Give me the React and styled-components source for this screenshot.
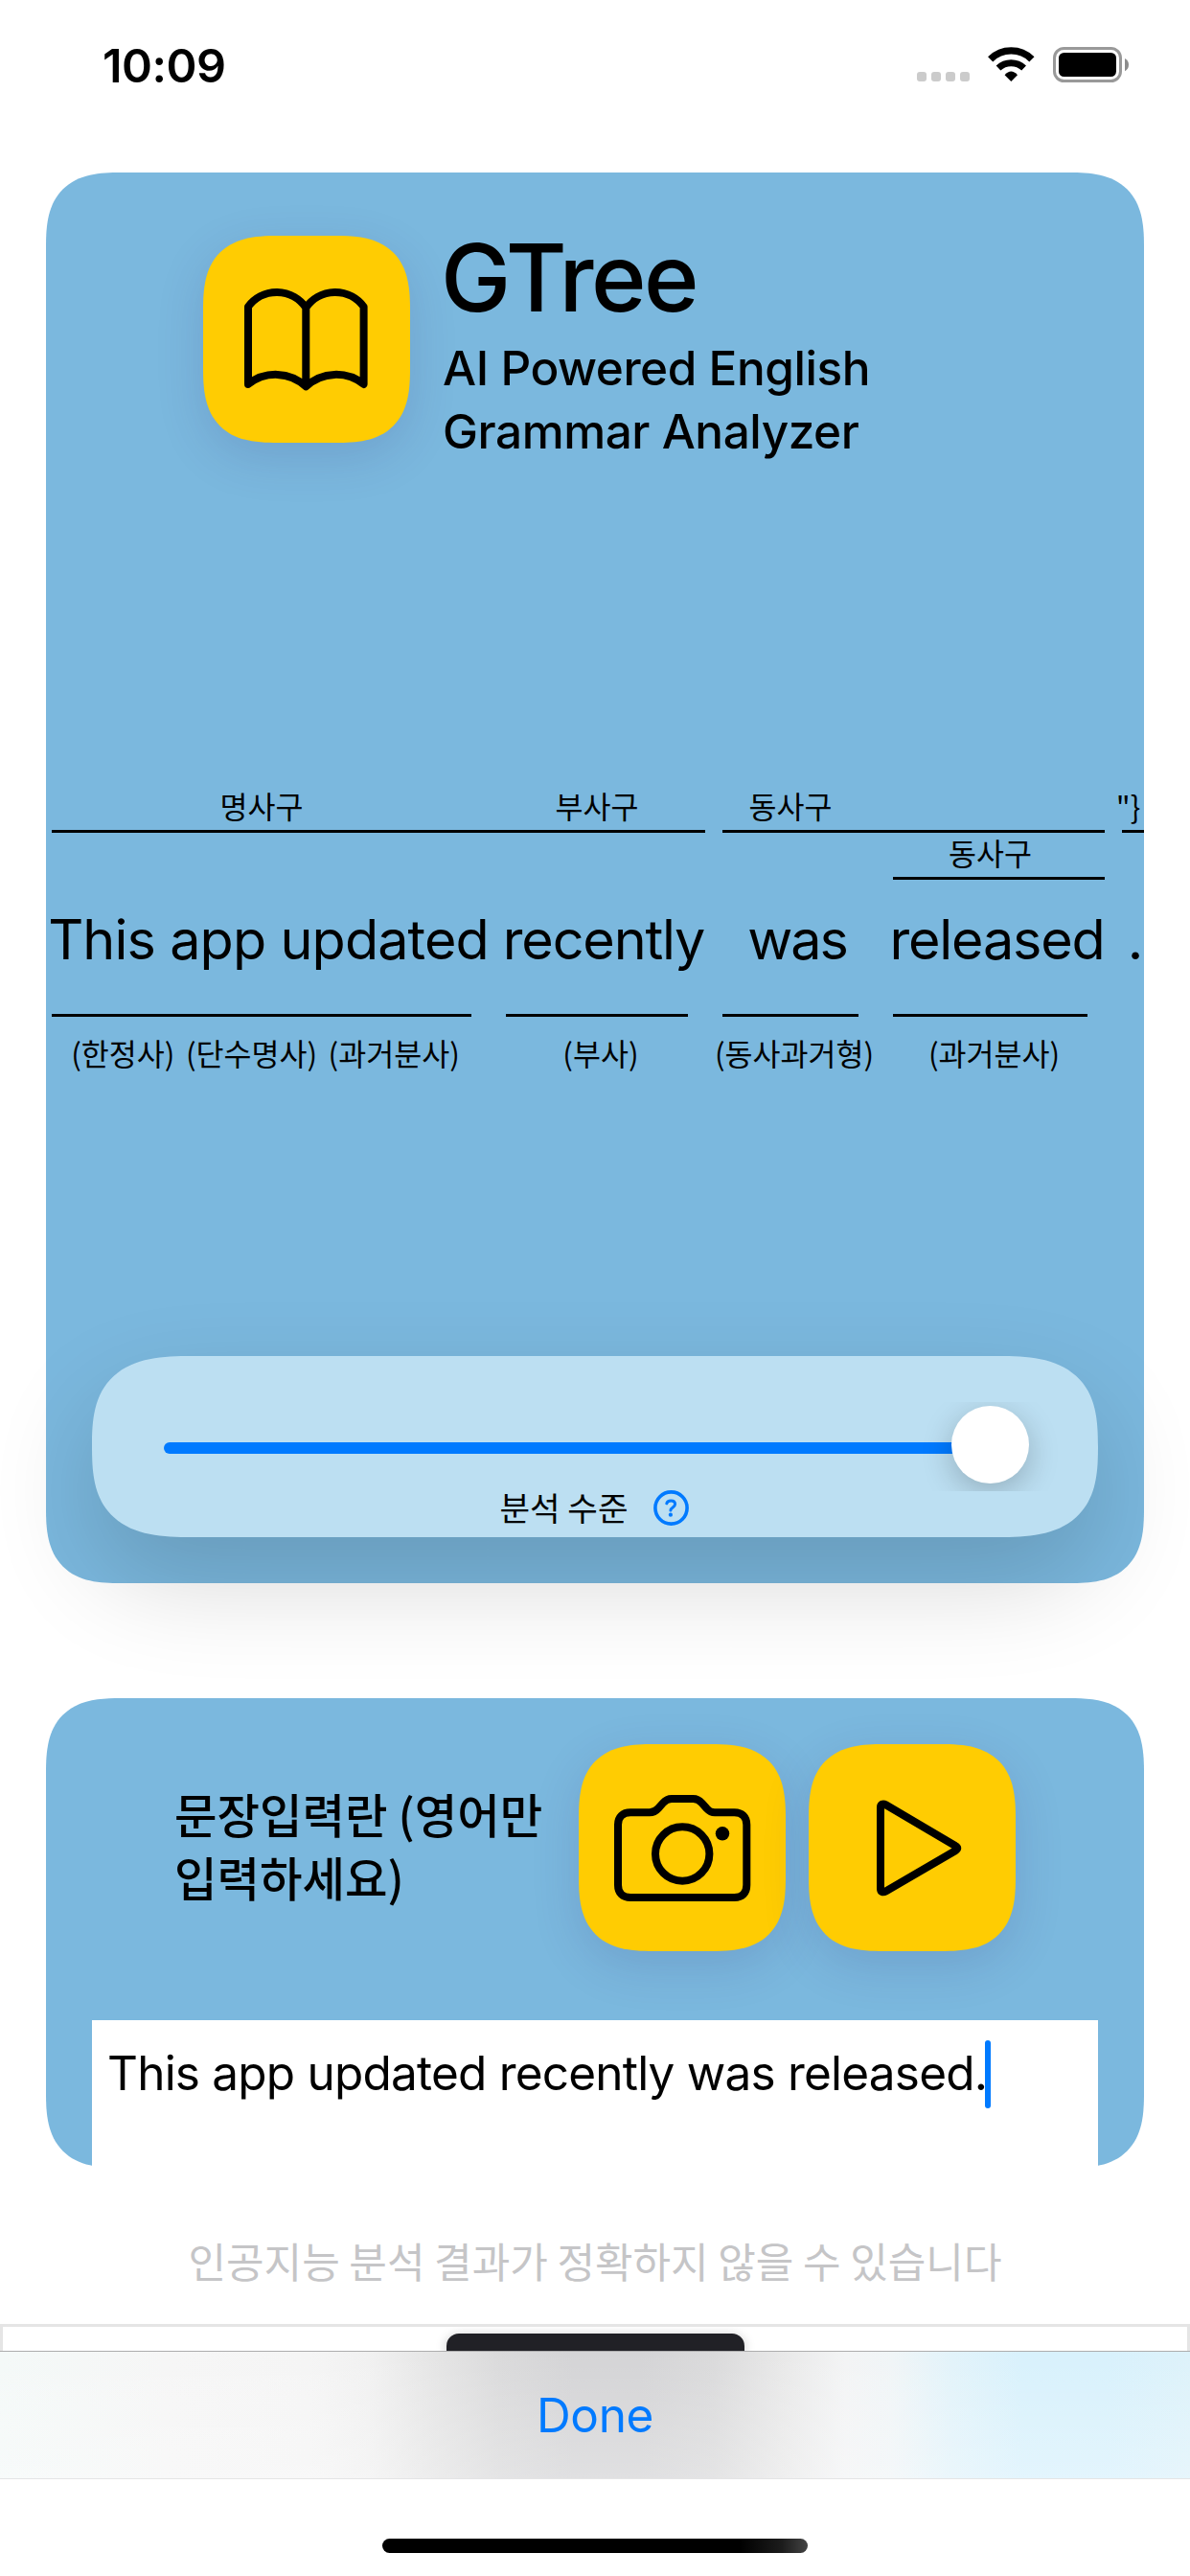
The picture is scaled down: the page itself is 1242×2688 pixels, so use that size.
import React from "react";
import styled, { createGlobalStyle } from "styled-components";

const LATIN = `Inter, "Noto Sans CJK KR", sans-serif`;
const KOREAN = `"Noto Sans CJK KR", Inter, sans-serif`;

const GlobalStyle = createGlobalStyle`
  * { box-sizing: border-box; }
  body { margin: 0; background: #fff; color: #000; font-family: ${LATIN}; }
  svg { display: block; }
`;

const Screen = styled.div`
  width: 1242px;
  height: 2688px;
  display: flex;
  flex-direction: column;
  background: #fff;
  overflow: hidden;
  white-space: nowrap;
`;

/* ---------- status bar ---------- */

const StatusBar = styled.header`
  flex: none;
  height: 135px;
  margin-bottom: 45px;
  padding: 0 64px 0 107px;
  display: flex;
  align-items: center;
  justify-content: space-between;
`;

const Clock = styled.time`
  padding-top: 1px;
  font-size: 48.5px;
  font-weight: 600;
  letter-spacing: -0.5px;
`;

const StatusIcons = styled.div`
  display: flex;
  gap: 19px;
`;

/* ---------- cards ---------- */

const Card = styled.section`
  flex: none;
  width: 1146px;
  height: ${(p) => p.$height}px;
  margin: ${(p) => p.$gapAbove ?? 0}px 48px 0;
  display: flex;
  flex-direction: column;
  background: #7bb8de;
  border-radius: 60px;
  @supports (corner-shape: superellipse(1.44)) {
    border-radius: 78px;
    corner-shape: superellipse(1.44);
  }
`;

const Tile = styled.div`
  flex: none;
  width: 216px;
  height: 216px;
  background: #ffcc02;
  border-radius: 60px;
  box-shadow: 0 15px 50px rgba(50, 45, 115, 0.155);
  @supports (corner-shape: superellipse(1.44)) {
    border-radius: 78px;
    corner-shape: superellipse(1.44);
  }
`;

const Brand = styled.div`
  display: flex;
  gap: 34px;
  padding: 49px 0 0 164px;
  height: 303px;

  ${Tile} { margin-top: 17px; }
`;

const AppName = styled.h1`
  margin: 0 0 0 -2px;
  font-size: 98px;
  font-weight: 500;
  line-height: 122px;
  letter-spacing: -2.6px;
`;

const Tagline = styled.p`
  margin: 0;
  font-size: 49.5px;
  font-weight: 500;
  line-height: 66px;
  letter-spacing: -0.46px;
`;

/* ---------- sentence diagram ---------- */

const Diagram = styled.div`
  display: flex;
  margin-top: 331px;
  padding-left: 6px;
  overflow: hidden;
`;

const Column = styled.div`
  flex: none;
  width: ${(p) => p.$pitch}px;
`;

const Centered = styled.div`
  display: flex;
  justify-content: center;
  width: ${(p) => p.$width}px;
`;

const PhraseLabel = styled(Centered)`
  height: ${(p) => (p.$nested ? 46 : 52)}px;
  font-family: ${KOREAN};
  font-size: 31.5px;
  line-height: ${(p) => (p.$nested ? 40 : 52)}px;
`;

const Rule = styled.div`
  height: 3px;
  width: ${(p) => p.$width}px;
  background: ${(p) => (p.$width ? "#000" : "transparent")};
`;

const Word = styled(Centered)`
  height: 140px;
  font-size: 57.5px;
  line-height: 124px;
  letter-spacing: ${(p) => p.$tracking ?? -1.2}px;
`;

const Tags = styled(Centered)`
  gap: 11.5px;
  height: 74px;
  font-family: ${KOREAN};
  font-size: 31.5px;
  line-height: 74px;
`;

const columns = [
  { pitch: 474, width: 438, over: 474, phrase: "명사구", word: "This app updated", tracking: -0.9, tags: ["(한정사)", "(단수명사)", "(과거분사)"] },
  { pitch: 226, width: 190, over: 208, phrase: "부사구", word: "recently", tags: ["(부사)"] },
  { pitch: 178, width: 142, over: 178, phrase: "동사구", word: "was", tracking: -2, tags: ["(동사과거형)"] },
  { pitch: 239, width: 203, over: 221, nested: "동사구", word: "released", tags: ["(과거분사)"] },
  { pitch: 23, width: 13, over: 23, phrase: '"}', word: ".", tags: [], end: true },
];

function DiagramColumn({ pitch, width, over, phrase, nested, word, tracking, tags, end }) {
  return (
    <Column $pitch={pitch}>
      <PhraseLabel $width={width}>{phrase}</PhraseLabel>
      <Rule $width={over} />
      <PhraseLabel $nested $width={width}>{nested}</PhraseLabel>
      <Rule $width={nested ? over : 0} />
      <Word $width={width + 14} $tracking={tracking}>{word}</Word>
      <Rule $width={end ? 0 : width} />
      <Tags $width={width + 8}>
        {tags.map((tag) => <span key={tag}>{tag}</span>)}
      </Tags>
    </Column>
  );
}

/* ---------- level slider ---------- */

const LevelPanel = styled.div`
  height: 189px;
  margin: auto 48px 48px;
  padding: 48px 72px 0 75px;
  background: #bcdff2;
  border-radius: 78px;
  box-shadow: 0 46px 108px rgba(0, 0, 0, 0.16);
  @supports (corner-shape: superellipse(1.48)) {
    border-radius: 104px / 94.5px;
    corner-shape: superellipse(1.48);
  }
`;

const Slider = styled.div`
  display: flex;
  align-items: center;
  height: 93px;
  padding: 4px 0 8px;
  clip-path: inset(0 -36px);
`;

const Track = styled.div`
  flex: 1;
  height: 12px;
  margin: 7px -6px 0 0;
  border-radius: 6px;
  background: #007aff;
`;

const Knob = styled.div`
  width: 81px;
  height: 81px;
  border-radius: 50%;
  background: #fff;
  box-shadow: 0 9px 32px rgba(0, 0, 0, 0.22);
`;

const LevelCaption = styled.div`
  display: flex;
  align-items: center;
  justify-content: center;
  gap: 27px;
  height: 32px;
  padding-right: 4px;
  font-family: ${KOREAN};
  font-size: 34.3px;
  line-height: 32px;

  span { margin-top: -1px; }
  svg { margin-top: 3px; }
`;

/* ---------- input card ---------- */

const InputHeader = styled.div`
  display: flex;
  align-items: center;
  height: 216px;
  margin-top: 48px;
  padding-left: 134px;
`;

const InputTitle = styled.h2`
  width: 422px;
  margin: 0 0 6px;
  font-family: ${KOREAN};
  font-size: 48.4px;
  font-weight: 500;
  line-height: 66px;
`;

const TileGroup = styled.div`
  display: flex;
  gap: 24px;
`;

const TextArea = styled.div`
  flex: 1;
  display: flex;
  align-items: flex-start;
  margin: 72px 48px 0;
  padding: 21px 0 0 16px;
  background: #fff;
  font-size: 49.5px;
  line-height: 68px;
  letter-spacing: -0.79px;
`;

const Caret = styled.span`
  width: 6px;
  height: 71px;
  margin-left: -2px;
  border-radius: 3px;
  background: #007aff;
`;

const Notice = styled.p`
  flex: none;
  height: 163px;
  margin: 0;
  padding-top: 65px;
  text-align: center;
  font-family: ${KOREAN};
  font-size: 43px;
  line-height: 62px;
  color: #c5c5c7;
`;

/* ---------- bottom area ---------- */

const AdFrame = styled.div`
  flex: none;
  display: flex;
  justify-content: center;
  height: 28px;
  padding-top: 7px;
  border: 3px solid #e5e5e5;
  border-bottom: 0;
  overflow: hidden;
`;

const AdBadge = styled.div`
  width: 311px;
  height: 18px;
  border-radius: 13px 13px 0 0;
  background: #212126;
  box-shadow: 0 2px 12px rgba(0, 0, 0, 0.22);
`;

const KeyboardBar = styled.div`
  flex: none;
  display: flex;
  align-items: center;
  justify-content: center;
  height: 134px;
  border-top: 1px solid #adadae;
  border-bottom: 1px solid #e4e4e5;
  background:
    linear-gradient(rgba(255, 255, 255, 0), rgba(255, 255, 255, 0.28)),
    linear-gradient(90deg,
      #f4f9f8 0%, #f6f6f6 14%, #f5f5f5 26%, #f1f1f1 31%, #e6e6e6 36%,
      #dadadb 42%, #d4d4d6 48%, #d4d4d6 54%, #dadadb 60%, #e9e9e9 66%,
      #f3f4f5 71%, #f0f5f7 75%, #e2f3fa 80%, #d8f1fc 86%, #d8f1fc 93%, #ddf2fa 100%);
`;

const DoneButton = styled.button`
  padding: 0;
  border: 0;
  background: none;
  font-family: ${LATIN};
  font-size: 49.5px;
  letter-spacing: -0.4px;
  color: #007aff;
`;

const HomeIndicator = styled.div`
  flex: none;
  align-self: center;
  width: 444px;
  height: 15px;
  margin-top: 62px;
  border-radius: 8px;
  background: linear-gradient(90deg, #000 84%, #1c1c1c 94%, #444 100%);
`;

/* ---------- icons ---------- */

const SignalIcon = () => (
  <svg width="55" height="37" fill="#cbcbcb">
    {[0, 15, 30, 45].map((x) => <rect key={x} x={x} y="26" width="10" height="10" rx="3" />)}
  </svg>
);

const WifiIcon = () => (
  <svg width="49" height="37" fill="none" stroke="#000">
    <path d="M2.7 12.8A30.7 30.7 0 0 1 45.9 12.8" strokeWidth="7.4" />
    <path d="M11 22A19.6 19.6 0 0 1 37.6 22" strokeWidth="7" />
    <path d="M17.6 29.3Q24.3 21.8 31 29.3L24.3 36Z" fill="#000" stroke="none" />
  </svg>
);

const BatteryIcon = () => (
  <svg width="79" height="37">
    <rect x="1.5" y="1.5" width="69" height="34" rx="10" fill="none" stroke="#999" strokeWidth="3" />
    <rect x="6" y="6" width="60" height="25" rx="5.5" />
    <path d="M75 12Q79 14 79 18.6T75 25.2Z" fill="#8c8c8c" />
  </svg>
);

const tileIcon = {
  width: 216,
  height: 216,
  fill: "none",
  stroke: "#000",
  strokeWidth: 8,
  strokeLinecap: "round",
  strokeLinejoin: "round",
};

const BookIcon = () => (
  <svg {...tileIcon}>
    <path d="M107.3 75A37 37 0 0 0 47 74V155A46 46 0 0 1 107.3 157.3A46 46 0 0 1 167.6 155V74A37 37 0 0 0 107.3 75V157" />
  </svg>
);

const CameraIcon = () => (
  <svg {...tileIcon}>
    <path d="M54 71.3H74C78 71.3 80.5 69.8 83 67L88 61.4C91 58 93 57 97 57H119.5C123.5 57 125.5 58 128.5 61.4L133.5 67C136.5 70.2 138 71.3 142 71.3H162.5C170.5 71.3 175.3 76 175.3 84V147C175.3 155.5 170.5 160 162.5 160H54C46 160 41 155.5 41 147V84C41 76 46 71.3 54 71.3Z" />
    <circle cx="108.2" cy="114.5" r="28.2" />
    <circle cx="150" cy="93.3" r="7.2" fill="#000" stroke="none" />
  </svg>
);

const PlayIcon = () => (
  <svg {...tileIcon}>
    <path d="M75 66C75 62.6 77.5 61.5 80.5 63.3L153 106C156 107.6 156 109.4 153 111.2L80.5 153.5C77.5 155.2 75 154.2 75 151Z" />
  </svg>
);

const HelpIcon = () => (
  <svg width="37" height="37" fill="none" stroke="#007aff" strokeLinecap="round">
    <circle cx="18.5" cy="18.5" r="16.6" strokeWidth="3.6" />
    <path d="M13.8 13.8C14.3 11.6 16 10.9 18.2 10.9C20.8 10.9 22.6 12.3 22.6 14.6C22.6 18 17.9 17.8 17.9 21" strokeWidth="3" />
    <circle cx="17.9" cy="25.7" r="2.1" fill="#007aff" stroke="none" />
  </svg>
);

export default function App() {
  return (
    <>
      <GlobalStyle />
      <Screen>
        <StatusBar>
          <Clock>10:09</Clock>
          <StatusIcons>
            <SignalIcon />
            <WifiIcon />
            <BatteryIcon />
          </StatusIcons>
        </StatusBar>

        <Card $height={1472}>
          <Brand>
            <Tile><BookIcon /></Tile>
            <div>
              <AppName>GTree</AppName>
              <Tagline>AI Powered English<br />Grammar Analyzer</Tagline>
            </div>
          </Brand>
          <Diagram>
            {columns.map((column) => <DiagramColumn key={column.word} {...column} />)}
          </Diagram>
          <LevelPanel>
            <Slider>
              <Track />
              <Knob />
            </Slider>
            <LevelCaption>
              <span>분석 수준</span>
              <HelpIcon />
            </LevelCaption>
          </LevelPanel>
        </Card>

        <Card $height={490} $gapAbove={120}>
          <InputHeader>
            <InputTitle>문장입력란 (영어만<br />입력하세요)</InputTitle>
            <TileGroup>
              <Tile><CameraIcon /></Tile>
              <Tile><PlayIcon /></Tile>
            </TileGroup>
          </InputHeader>
          <TextArea>
            <span>This app updated recently was released.</span>
            <Caret />
          </TextArea>
        </Card>

        <Notice>인공지능 분석 결과가 정확하지 않을 수 있습니다</Notice>
        <AdFrame><AdBadge /></AdFrame>
        <KeyboardBar><DoneButton>Done</DoneButton></KeyboardBar>
        <HomeIndicator />
      </Screen>
    </>
  );
}
